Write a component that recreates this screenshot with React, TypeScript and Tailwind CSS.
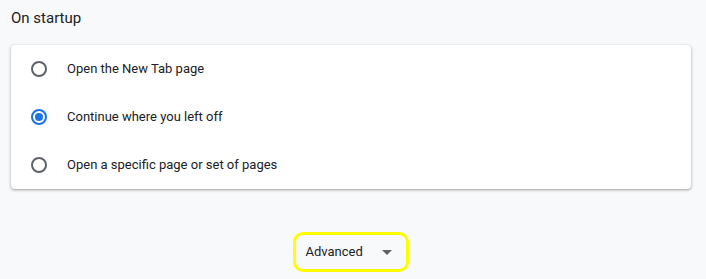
const options = [
  { label: "Open the New Tab page", checked: false },
  { label: "Continue where you left off", checked: true },
  { label: "Open a specific page or set of pages", checked: false },
];

const Radio = ({ checked }: { checked: boolean }) => (
  <div
    className={
      "w-4 h-4 rounded-full border-2 flex items-center justify-center " +
      (checked ? "border-[#1a73e8]" : "border-[#5f6368]")
    }
  >
    {checked && <div className="w-2 h-2 rounded-full bg-[#1a73e8]" />}
  </div>
);

export default function App() {
  return (
    <div className="w-[706px] h-[279px] bg-[#f8f9fa] font-['Roboto',sans-serif] text-[#202124] overflow-hidden">
      <div className="px-[11px] pt-[9px]">
        <h2 className="text-[15px] leading-[18px] font-normal">On startup</h2>
      </div>

      <div className="mx-[11px] mt-[18px] w-[680px] bg-white rounded-[4px] shadow-[0_1px_2px_rgba(60,64,67,0.3),0_1px_3px_1px_rgba(60,64,67,0.15)]">
        {options.map((opt, i) => (
          <div key={i} className="h-12 flex items-center pl-[20px]">
            <Radio checked={opt.checked} />
            <span className="ml-[20px] text-[13px]">{opt.label}</span>
          </div>
        ))}
      </div>

      <div className="flex justify-center mt-[43px] pr-[5px]">
        <div className="w-[116px] h-[40px] border-[3px] border-[#ffff00] rounded-[10px] flex items-center pl-[10px]">
          <span className="text-[13px] text-[#202124]">Advanced</span>
          <svg className="ml-[19px]" width="10" height="5" viewBox="0 0 10 5">
            <path d="M0 0 L10 0 L5 5 Z" fill="#5f6368" />
          </svg>
        </div>
      </div>
    </div>
  );
}
